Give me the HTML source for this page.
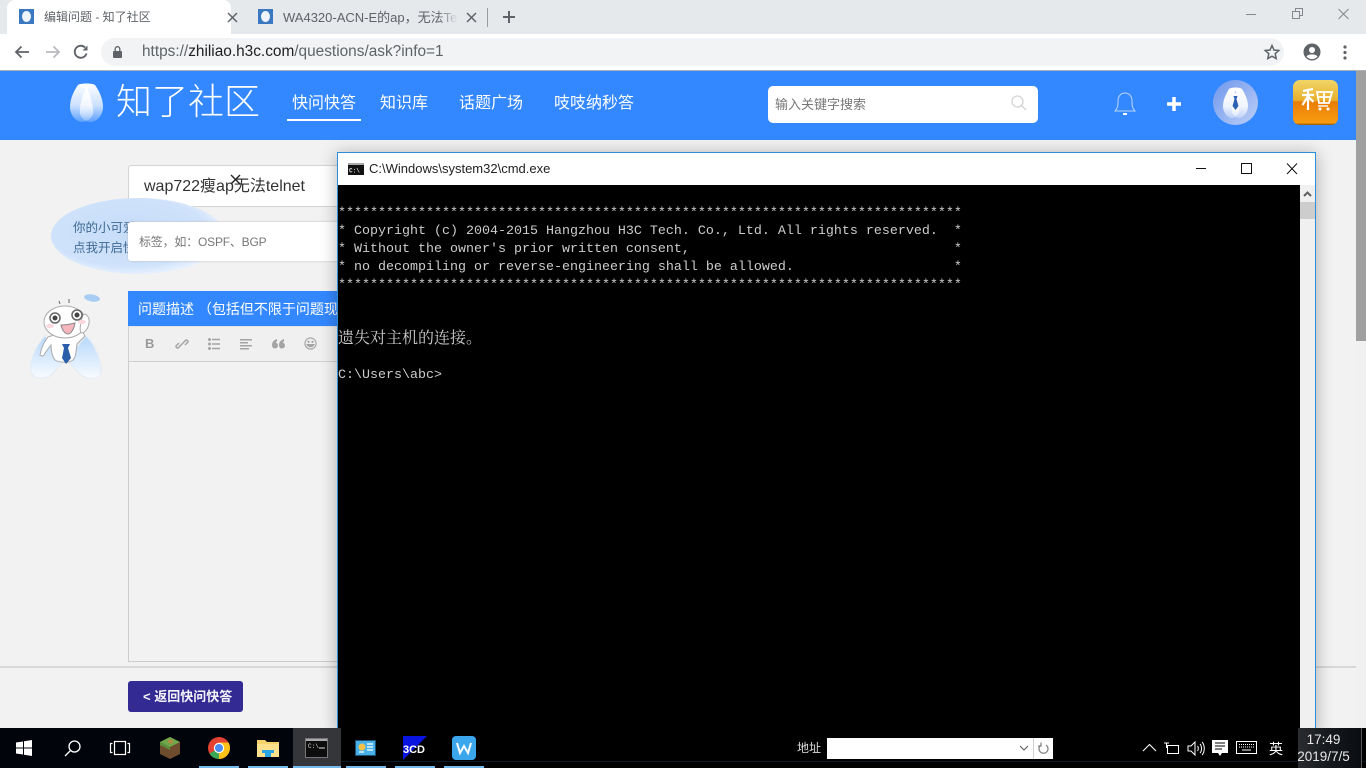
<!DOCTYPE html>
<html lang="zh"><head><meta charset="utf-8"><title>编辑问题 - 知了社区</title>
<style>
*{box-sizing:border-box}
html,body{margin:0;padding:0;width:1366px;height:768px;overflow:hidden;background:#f2f2f2;font-family:"Liberation Sans","Noto Sans CJK SC",sans-serif}
.a{position:absolute;white-space:pre}
svg{position:absolute;overflow:visible}
.term{position:absolute;left:338px;font:13.33px/18px "Liberation Mono","Noto Serif CJK SC",monospace;color:#ccc;white-space:pre;height:18px}
</style></head><body>
<!-- chrome tab strip -->
<div class="a" style="left:0;top:0;width:1366px;height:34px;background:#e6e9ec"></div>
<div class="a" style="left:7px;top:0;width:224px;height:34px;background:#fff;border-radius:8px 8px 0 0"></div>
<div class="a" style="left:0;top:34px;width:1366px;height:36px;background:#fff"></div>
<div class="a" style="left:0;top:70px;width:1366px;height:1px;background:#aeb2b6"></div>
<svg style="left:19px;top:9px" width="15" height="15"><rect width="15" height="15" fill="#3a78c2"/><ellipse cx="7.500" cy="7.500" rx="4.500" ry="5.500" fill="#eef4fb"/></svg>
<div class="a" style="left:44px;top:9px;font-size:12px;line-height:17px;color:#5f6368">编辑问题 - 知了社区</div>
<svg style="left:227px;top:12px" width="10" height="10"></svg>
<svg style="left:228px;top:12px" width="10" height="10"></svg>
<svg style="left:228px;top:13px" width="9" height="9"><path d="M0 0L9 9M9 0L0 9" stroke="#5f6368" stroke-width="1.500" transform="translate(0 0)"/></svg>
<svg style="left:258px;top:9px" width="15" height="15"><rect width="15" height="15" fill="#3a78c2"/><ellipse cx="7.500" cy="7.500" rx="4.500" ry="5.500" fill="#eef4fb"/></svg>
<div class="a" style="left:283px;top:9px;width:175px;overflow:hidden;font-size:13px;line-height:17px;color:#5f6368">WA4320-ACN-E的ap，无法Teln</div>
<div class="a" style="left:438px;top:8px;width:20px;height:20px;background:linear-gradient(90deg,rgba(230,233,236,0),#e6e9ec)"></div>
<svg style="left:467px;top:13px" width="9" height="9"><path d="M0 0L9 9M9 0L0 9" stroke="#5f6368" stroke-width="1.500"/></svg>
<div class="a" style="left:487px;top:8px;width:1px;height:19px;background:#9a9da1"></div>
<svg style="left:503px;top:11px" width="12" height="12"><path d="M6 0V12M0 6H12" stroke="#5f6368" stroke-width="2"/></svg>
<svg style="left:1246px;top:8px" width="110" height="20" fill="none" stroke="#85888c"><path d="M0 6.500H10"/><path d="M46.500 3.500h7v7h-7zM49.500 3.500v-3h7v7h-3"/><path d="M92.500 1L102.500 11M102.500 1L92.500 11"/></svg>
<!-- omnibox -->
<div class="a" style="left:101px;top:38px;width:1183px;height:28px;background:#f1f3f4;border-radius:14px"></div>
<svg style="left:14px;top:44px" width="16" height="16" fill="none" stroke="#5f6368" stroke-width="1.800"><path d="M15 8H2M7.500 2.500L2 8l5.500 5.500"/></svg>
<svg style="left:45px;top:44px" width="16" height="16" fill="none" stroke="#b8babd" stroke-width="1.800"><path d="M1 8H14M8.500 2.500L14 8l-5.500 5.500"/></svg>
<svg style="left:73px;top:44px" width="16" height="16" fill="none" stroke="#5f6368" stroke-width="1.900"><path d="M13.500 9.500A6 6 0 1 1 12 3.500"/><path d="M9.500 6.500h5v-5z" fill="#5f6368" stroke="none"/></svg>
<svg style="left:113px;top:46px" width="12" height="12"><rect x="0" y="5" width="9" height="7" rx="1" fill="#5f6368"/><path d="M2.200 5V3a2.300 2.300 0 0 1 4.600 0V5" fill="none" stroke="#5f6368" stroke-width="1.300"/></svg>
<div class="a" style="left:142px;top:42px;font-size:15.400px;line-height:20px;color:#5f6368">https://<span style="color:#202124">zhiliao.h3c.com</span>/questions/ask?info=1</div>
<svg style="left:1264px;top:44px" width="16" height="16" fill="none" stroke="#5f6368" stroke-width="1.500"><path d="M8 1.500l2 4.500 4.800.5-3.600 3.200 1 4.800L8 12.200l-4.200 2.300 1-4.800L1.200 6.500 6 6z"/></svg>
<svg style="left:1303px;top:43px" width="18" height="18"><circle cx="9" cy="9" r="8.500" fill="#5f6368"/><circle cx="9" cy="7" r="3" fill="#fff"/><path d="M3.500 13.500c2-2.800 9-2.800 11 0a7 7 0 0 1-11 0z" fill="#fff"/></svg>
<svg style="left:1343px;top:45px" width="4" height="16" fill="#5f6368"><circle cx="2" cy="2" r="1.600"/><circle cx="2" cy="7.500" r="1.600"/><circle cx="2" cy="13" r="1.600"/></svg>
<!-- site header -->
<div class="a" style="left:0;top:71px;width:1356px;height:69px;background:#3388ff"></div>
<div class="a" style="left:1356px;top:71px;width:10px;height:657px;background:#f1f1f1"></div>
<div class="a" style="left:1356px;top:71px;width:10px;height:270px;background:#a0a0a0"></div>
<svg style="left:70px;top:83px" width="33" height="40"><defs><linearGradient id="w" x1="0" y1="0" x2="0" y2="1"><stop offset="0" stop-color="#fff" stop-opacity=".98"/><stop offset=".55" stop-color="#fff" stop-opacity=".75"/><stop offset="1" stop-color="#fff" stop-opacity=".2"/></linearGradient></defs>
<path d="M8 2C3 9 0 17 0 24c0 9 7 15 12 15 5 0 9-3 11-8 1-5-2-20-8-29z" fill="url(#w)"/>
<path d="M25 2c5 7 8 15 8 22 0 9-7 15-12 15-5 0-9-3-11-8-1-5 2-20 8-29z" fill="url(#w)"/>
<path d="M8 2c2-2 15-2 17 0l-8 4z" fill="#fff"/></svg>
<div class="a" style="left:116px;top:78px;font-size:36px;line-height:48px;font-weight:300;color:#fff">知了社区</div>
<div class="a" style="left:292px;top:94px;font-size:16px;line-height:20px;color:#fff">快问快答</div>
<div class="a" style="left:287px;top:119px;width:74px;height:2px;background:#fff"></div>
<div class="a" style="left:380px;top:94px;font-size:16px;line-height:20px;color:#fff">知识库</div>
<div class="a" style="left:459px;top:94px;font-size:16px;line-height:20px;color:#fff">话题广场</div>
<div class="a" style="left:554px;top:94px;font-size:16px;line-height:20px;color:#fff">吱吱纳秒答</div>
<div class="a" style="left:768px;top:86px;width:270px;height:37px;background:#fff;border-radius:5px"></div>
<div class="a" style="left:775px;top:96px;font-size:13px;line-height:18px;color:#777">输入关键字搜索</div>
<svg style="left:1011px;top:95px" width="16" height="16" fill="none" stroke="#d4d4d4" stroke-width="1.300"><circle cx="6.500" cy="6.500" r="5.500"/><path d="M10.500 10.500L15 15"/></svg>
<svg style="left:1114px;top:91px" width="22" height="24" fill="none" stroke="#b9d6ff" stroke-width="1"><path d="M1 20c3-3 3-6 3-10 0-5 3-8 7-8s7 3 7 8c0 4 0 7 3 10z"/><path d="M9 23h4" stroke-width="2" stroke="#fff"/></svg>
<svg style="left:1167px;top:97px" width="14" height="14"><path d="M7 0V14M0 7H14" stroke="#fff" stroke-width="3.500"/></svg>
<svg style="left:1213px;top:80px" width="45" height="45"><defs><linearGradient id="av" x1="0" y1="0" x2="1" y2="1"><stop offset="0" stop-color="#6f97ec"/><stop offset="1" stop-color="#bccff7"/></linearGradient><linearGradient id="av2" x1="0" y1="0" x2="0" y2="1"><stop offset="0" stop-color="#fff"/><stop offset=".6" stop-color="#fff" stop-opacity=".85"/><stop offset="1" stop-color="#fff" stop-opacity=".3"/></linearGradient></defs><circle cx="22.500" cy="22.500" r="22.500" fill="url(#av)"/><path d="M16 9c-3 5-6 11-6 17 0 7 5 12 9 12 3 0 5-2 7-5 1-4-1-17-6-24z" fill="url(#av2)"/><path d="M29 9c3 5 6 11 6 17 0 7-5 12-9 12-3 0-5-2-7-5-1-4 1-17 6-24z" fill="url(#av2)"/><path d="M16 9c2-2 11-2 13 0l-6 3z" fill="#fff"/><path d="M20.500 16h4l-1 3 2 7-3 4-3-4 2-7z" fill="#2e62b4"/></svg>
<div class="a" style="left:1293px;top:80px;width:45px;height:45px;border-radius:7px;background:linear-gradient(180deg,#f0d668 0,#e9ae2a 46%,#e87c06 48%,#f99c10 95%,#8f5508 100%)"></div>
<svg style="left:1298px;top:88px" width="36" height="24" fill="none" stroke="#fff" stroke-width="2.200"><path d="M5 3L15 1M4 7H16M10 2V22M9.500 9L4.500 17M10.500 9L15.500 14"/><path d="M19 4H34L31 15H21zM21 9H32M26 4V15" stroke-width="1.800"/><path d="M20 18H30" stroke-width="1.400"/><circle cx="22" cy="21" r="1.500" fill="#fff" stroke="none"/><circle cx="30" cy="21" r="1.500" fill="#fff" stroke="none"/></svg>
<!-- form behind -->
<div class="a" style="left:128px;top:165px;width:215px;height:42px;background:#fff;border:1px solid #d4d4d4;border-radius:3px"></div>
<div class="a" style="left:144px;top:177px;font-size:16px;line-height:20px;color:#333">wap722瘦ap无法telnet</div>
<svg style="left:231px;top:175px" width="9" height="9"><path d="M0 0L9 9M9 0L0 9" stroke="#222" stroke-width="1.400"/></svg>
<svg style="left:50px;top:198px" width="180" height="78"><defs><radialGradient id="b" cx=".45" cy=".45" r=".6"><stop offset="0" stop-color="#c6dcf8"/><stop offset=".75" stop-color="#cfe2fb"/><stop offset="1" stop-color="#f0f6fe"/></radialGradient></defs><ellipse cx="88" cy="38" rx="87" ry="38" fill="url(#b)"/></svg>
<div class="a" style="left:73px;top:218px;font-size:12.500px;line-height:20px;color:#3f6a94">你的小可爱
点我开启快</div>
<div class="a" style="left:128px;top:222px;width:215px;height:39px;background:#fff;border-radius:3px;box-shadow:0 0 2px #bbb"></div>
<div class="a" style="left:139px;top:234px;font-size:12px;line-height:17px;color:#777;letter-spacing:-.2px">标签，如：OSPF、BGP</div>
<div class="a" style="left:128px;top:291px;width:215px;height:35px;background:#3388ff"></div>
<div class="a" style="left:138px;top:299px;width:200px;overflow:hidden;font-size:14px;line-height:20px;color:#fff">问题描述 （包括但不限于问题现象）</div>
<div class="a" style="left:128px;top:326px;width:215px;height:36px;background:#f0f0f0;border:1px solid #d0d0d0;border-top:1px solid #e4e4e4"></div>
<div class="a" style="left:128px;top:362px;width:215px;height:300px;background:#f2f2f2;border:1px solid #ccc;border-top:0"></div>
<div class="a" style="left:145px;top:335px;font-size:13px;font-weight:700;line-height:18px;color:#999">B</div>
<svg style="left:175px;top:337px" width="14" height="14" fill="none" stroke="#a4a4a4" stroke-width="1.500"><path d="M6 8l-3 3a1.800 1.800 0 0 1-2-2l3-3M8 6l3-3a1.800 1.800 0 0 1 2 2l-3 3M5 9l4-4"/></svg>
<svg style="left:208px;top:338px" width="12" height="12" fill="#a4a4a4"><circle cx="1.500" cy="1.500" r="1.500"/><circle cx="1.500" cy="6" r="1.500"/><circle cx="1.500" cy="10.500" r="1.500"/><path d="M4 .7h8v1.600H4zM4 5.200h8v1.600H4zM4 9.700h8v1.600H4z"/></svg>
<svg style="left:240px;top:338px" width="12" height="12" fill="#a4a4a4"><path d="M0 1h12v1.500H0zM0 4h8v1.500H0zM0 7h12v1.500H0zM0 10h9v1.500H0z"/></svg>
<svg style="left:272px;top:339px" width="13" height="10" fill="#a4a4a4"><circle cx="3" cy="6.500" r="3"/><circle cx="10" cy="6.500" r="3"/><path d="M0 6C0 3 2 1 5 0v2L3 5zM7 6c0-3 2-5 5-6v2l-2 3z"/></svg>
<svg style="left:304px;top:337px" width="13" height="13" fill="none" stroke="#a4a4a4" stroke-width="1.100"><circle cx="6.500" cy="6.500" r="5.600"/><path d="M3 7.500c1.500 3 5.500 3 7 0z" fill="#a4a4a4"/><circle cx="4.500" cy="4.800" r=".6"/><circle cx="8.500" cy="4.800" r=".6"/></svg>
<!-- mascot -->
<svg style="left:28px;top:292px" width="78" height="90">
<ellipse cx="64" cy="6" rx="8" ry="3.500" fill="#a8cdf5" transform="rotate(10 64 6)"/>
<defs><linearGradient id="wg" x1="0" y1="0" x2="0" y2="1"><stop offset="0" stop-color="#b6d8fb"/><stop offset="1" stop-color="#f8fbff"/></linearGradient></defs>
<path d="M17 44C7 54 1 72 3 80c2 7 13 8 20 3l14-15z" fill="url(#wg)" stroke="#e3ebf4"/>
<path d="M58 44c9 8 16 26 15 36-1 8-12 8-20 3L38 68z" fill="url(#wg)" stroke="#e3ebf4"/>
<path d="M20 45c-4 5-7 12-8 18 2 2 4 1 5-2l6-8c0 7 2 13 4 15 5 3 14 3 18 0 3-3 3-9 4-16l8-8-6-10z" fill="#fff" stroke="#aaa"/>
<ellipse cx="37" cy="30" rx="21" ry="16" fill="#fff" stroke="#aaa"/>
<path d="M55 23c3-3 7 3 6 8-1 6-4 10-8 10-2-3 0-13 2-18z" fill="#fff" stroke="#aaa"/>
<path d="M32 12l-1-3M41 11V7" stroke="#666"/>
<circle cx="27" cy="26" r="5" fill="#fff" stroke="#666" stroke-width="1.500"/><circle cx="27" cy="26" r="2.500" fill="#444"/>
<circle cx="49" cy="23" r="5" fill="#fff" stroke="#666" stroke-width="1.500"/><circle cx="49" cy="23" r="2.500" fill="#444"/>
<ellipse cx="22" cy="34" rx="4" ry="2" fill="#fbd8dd"/><ellipse cx="54" cy="30" rx="4" ry="2" fill="#fbd8dd"/>
<path d="M33 33c4 0 10-1 14-2-1 6-4 11-7 11-3 0-6-4-7-9z" fill="#f5b6bd" stroke="#888"/>
<path d="M34 52h8l-2 4 3 10-5 6-4-6 2-10z" fill="#2a5ea8"/>
</svg>
<!-- bottom bar -->
<div class="a" style="left:0;top:666px;width:340px;height:2px;background:#d8d8d8"></div>
<div class="a" style="left:128px;top:681px;width:115px;height:31px;background:#332a93;border-radius:3px"></div>
<div class="a" style="left:143px;top:688px;font-size:13px;font-weight:700;line-height:18px;color:#f4f4f8">&lt; 返回快问快答</div>
<div class="a" style="left:1316px;top:666px;width:40px;height:2px;background:#d8d8d8"></div>
<!-- cmd window -->
<div class="a" style="left:337px;top:152px;width:979px;height:580px;background:#fff;border:1px solid #2b90d9;box-shadow:0 2px 16px rgba(0,0,0,.3)"></div>
<div class="a" style="left:338px;top:185px;width:962px;height:543px;background:#000"></div>
<div class="a" style="left:1300px;top:185px;width:15px;height:543px;background:#f0f0f0"></div>
<div class="a" style="left:1300px;top:202px;width:15px;height:17px;background:#cdcdcd"></div>
<svg style="left:1303px;top:191px" width="9" height="6" fill="none" stroke="#606060" stroke-width="2"><path d="M1 5L4.500 1.500 8 5"/></svg>
<svg style="left:348px;top:163px" width="16" height="12"><rect width="16" height="12" fill="#111"/><rect width="16" height="2" fill="#aaa"/><text x="1" y="9.500" font-size="6" font-weight="700" fill="#ddd" font-family="Liberation Mono">C:\</text></svg>
<div class="a" style="left:369px;top:160px;font-size:13px;line-height:18px;color:#222">C:\Windows\system32\cmd.exe</div>
<svg style="left:1196px;top:163px" width="106" height="12" fill="none" stroke="#111"><path d="M0 5.500H10"/><path d="M45.500 .500h10v10h-10z" stroke-width="1"/><path d="M91 .500L101 11M101 .500L91 11"/></svg>
<div class="term" style="top:205px">******************************************************************************</div>
<div class="term" style="top:223px">* Copyright (c) 2004-2015 Hangzhou H3C Tech. Co., Ltd. All rights reserved.  *</div>
<div class="term" style="top:241px">* Without the owner's prior written consent,                                 *</div>
<div class="term" style="top:259px">* no decompiling or reverse-engineering shall be allowed.                    *</div>
<div class="term" style="top:277px">******************************************************************************</div>
<div class="term" style="top:330px;font-size:16px">遗失对主机的连接。</div>
<div class="term" style="top:367px">C:\Users\abc&gt;</div>
<!-- taskbar -->
<div class="a" style="left:0;top:728px;width:338px;height:40px;background:#02040b"></div>
<div class="a" style="left:338px;top:728px;width:1028px;height:40px;background:#000"></div>
<div class="a" style="left:338px;top:761px;width:1028px;height:1px;background:#0b1a26"></div>
<div class="a" style="left:293px;top:728px;width:48px;height:40px;background:#34363a"></div>
<div class="a" style="left:199px;top:766px;width:40px;height:2px;background:#76b9ed"></div>
<div class="a" style="left:248px;top:766px;width:40px;height:2px;background:#76b9ed"></div>
<div class="a" style="left:293px;top:766px;width:48px;height:2px;background:#76b9ed"></div>
<div class="a" style="left:346px;top:766px;width:40px;height:2px;background:#76b9ed"></div>
<div class="a" style="left:395px;top:766px;width:40px;height:2px;background:#76b9ed"></div>
<div class="a" style="left:444px;top:766px;width:40px;height:2px;background:#76b9ed"></div>
<svg style="left:16px;top:740px" width="16" height="16" fill="#fff"><path d="M0 2.500L7 1.500V7.500H0zM8 1.300L16 0V7.500H8zM0 8.500H7V14.500L0 13.500zM8 8.500H16V16L8 14.700z"/></svg>
<svg style="left:64px;top:740px" width="17" height="17" fill="none" stroke="#fff" stroke-width="1.300"><circle cx="10.500" cy="6.500" r="5.500"/><path d="M6.500 10.500L1 16"/></svg>
<svg style="left:110px;top:741px" width="20" height="14" fill="none" stroke="#fff" stroke-width="1.200"><rect x="4.500" y=".500" width="11" height="13"/><path d="M2.500 2.500H.500v9h2M17.500 2.500h2v9h-2"/></svg>
<svg style="left:159px;top:736px" width="22" height="24"><path d="M11 1L21 6V18L11 23 1 18V6z" fill="#6f4c2d"/><path d="M11 1L21 6 11 11 1 6z" fill="#6ea84a"/><path d="M8 5l4-2 3 3-4 2z" fill="#b58a44"/><path d="M1 6L11 11V14L1 9z" fill="#5c8f3d"/></svg>
<svg style="left:208px;top:737px" width="22" height="22"><circle cx="11" cy="11" r="11" fill="#e34133"/><path d="M11 11L1.500 16.500A11 11 0 0 0 11 22z" fill="#3da855"/><path d="M11 11L11 22A11 11 0 0 0 20.500 5.500H11z" fill="#fbc116"/><circle cx="11" cy="11" r="5.200" fill="#fff"/><circle cx="11" cy="11" r="4" fill="#4a8cf0"/></svg>
<svg style="left:257px;top:739px" width="22" height="18"><path d="M0 1h8l2 2h12v15H0z" fill="#f5d26c"/><path d="M0 5h22v13H0z" fill="#ffe08d"/><path d="M5 11h12v3h-3v4H8v-4H5z" fill="#2aa7e3"/></svg>
<svg style="left:305px;top:738px" width="23" height="20"><rect x=".5" y=".5" width="22" height="19" fill="#0d0d0d" stroke="#777"/><rect x="1" y="1" width="21" height="2" fill="#aaa"/><text x="3" y="10" font-size="6" fill="#ddd" font-family="Liberation Mono">C:\</text><path d="M14 10h6" stroke="#ddd"/></svg>
<svg style="left:355px;top:740px" width="21" height="16"><rect x=".5" y=".5" width="20" height="15" fill="#46b1e8" stroke="#1d4f72"/><circle cx="7" cy="7" r="3.500" fill="#f4c04a"/><path d="M12 4h6M12 7h6M12 10h6M4 12h5" stroke="#fff" stroke-width="1.300"/></svg>
<svg style="left:403px;top:736px" width="24" height="24"><path d="M0 0H24L0 24z" fill="#0a14e0"/><text x="0" y="17" font-size="11" font-weight="700" fill="#fff" font-family="Liberation Sans">3CD</text></svg>
<svg style="left:452px;top:736px" width="24" height="24"><rect width="24" height="24" rx="4" fill="#3ba6ec"/><path d="M5 7l3 10 4-7 4 7 3-10" fill="none" stroke="#fff" stroke-width="2"/></svg>
<div class="a" style="left:797px;top:739px;font-size:12px;line-height:18px;color:#ddd">地址</div>
<div class="a" style="left:827px;top:738px;width:226px;height:21px;background:#fff"></div>
<div class="a" style="left:1033px;top:738px;width:1px;height:21px;background:#d0d0d0"></div>
<svg style="left:1019px;top:745px" width="10" height="7" fill="none" stroke="#555"><path d="M1 1L5 5 9 1"/></svg>
<svg style="left:1038px;top:742px" width="11" height="13" fill="none" stroke="#888" stroke-width="1.300"><path d="M3 3a4.500 4.500 0 1 0 5 0M3 .5V4H0"/></svg>
<svg style="left:1142px;top:743px" width="15" height="9" fill="none" stroke="#fff" stroke-width="1.100"><path d="M1 8L7.500 1.500 14 8"/></svg>
<svg style="left:1163px;top:742px" width="18" height="14" fill="none" stroke="#fff"><rect x="4.500" y="3.500" width="11" height="8"/><path d="M1 1h5M3.500 1v5"/></svg>
<svg style="left:1187px;top:741px" width="18" height="15" fill="none" stroke="#fff"><path d="M1 5h3l4-4v13l-4-4H1zM10.500 5c1 1 1 4 0 5M13 3c2 2 2 7 0 9M15 1c3 3 3 10 0 13"/></svg>
<svg style="left:1212px;top:740px" width="16" height="17"><path d="M0 0H16V13H10L8 16 6 13H0z" fill="#fff"/><path d="M3 3H13M3 6H13M3 9H10" stroke="#000"/></svg>
<svg style="left:1236px;top:741px" width="23" height="13" fill="none" stroke="#fff"><rect x=".5" y=".5" width="20" height="12"/><path d="M3 3.500H18M3 6H18" stroke-dasharray="1 1"/><path d="M6 9H15"/></svg>
<div class="a" style="left:1269px;top:739px;font-size:14px;line-height:20px;color:#fff">英</div>
<div class="a" style="left:1298px;top:728px;width:63px;height:40px;background:linear-gradient(90deg,#2a2c2f,#14171b 55%,#0a0d11)"></div>
<div class="a" style="left:1361px;top:728px;width:1px;height:40px;background:#555"></div>
<div class="a" style="left:1292px;top:731px;width:63px;text-align:center;font-size:13.500px;line-height:17px;color:#e8e8e8">17:49</div>
<div class="a" style="left:1292px;top:748px;width:63px;text-align:center;font-size:13.500px;line-height:17px;color:#e8e8e8">2019/7/5</div>
</body></html>
